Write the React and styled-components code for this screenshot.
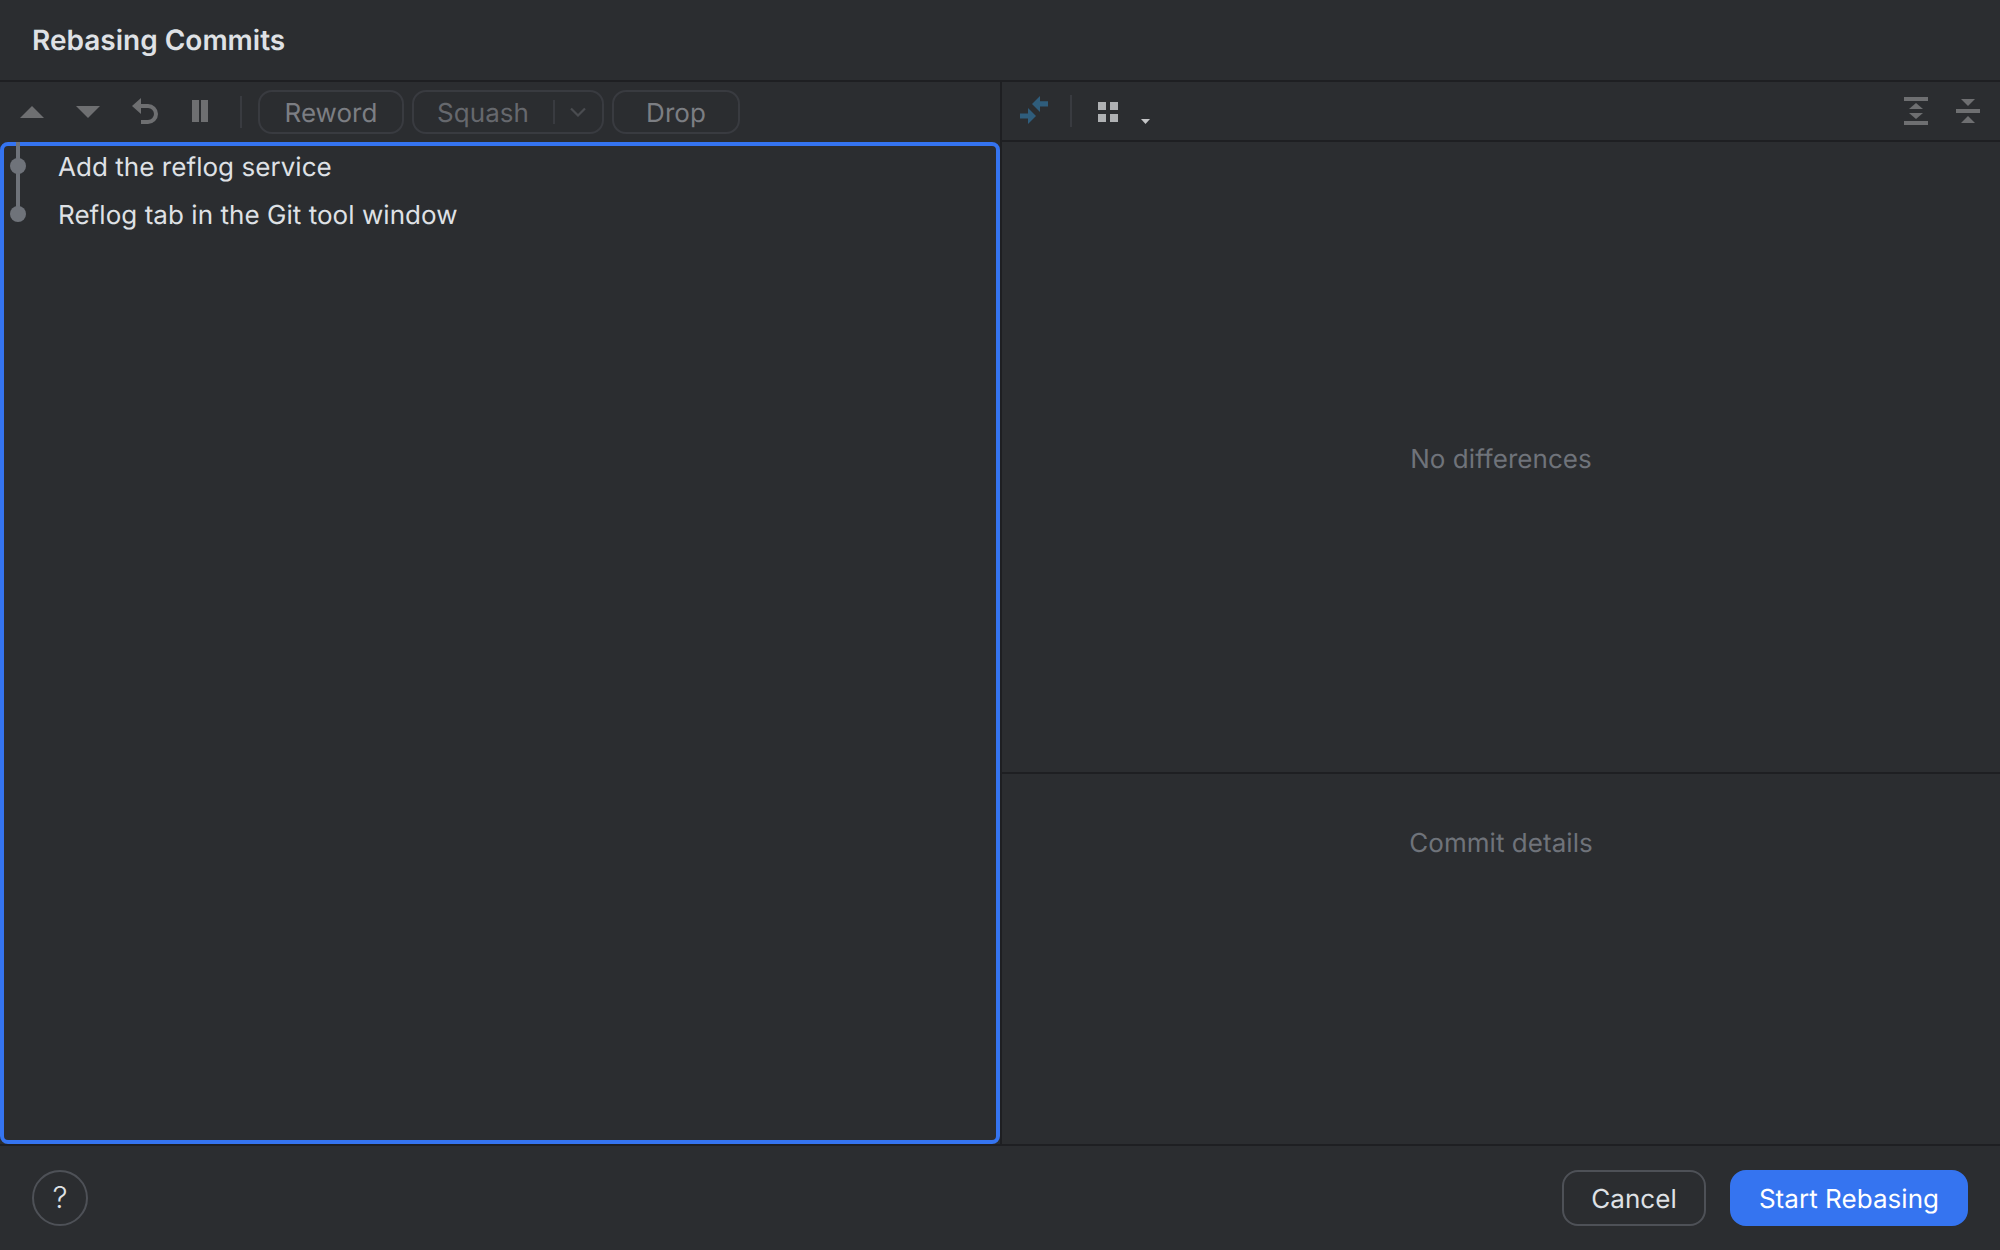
import React from 'react';
import styled, { createGlobalStyle } from 'styled-components';

const GlobalStyle = createGlobalStyle`
  html, body {
    margin: 0;
    padding: 0;
    background: #2b2d30;
  }
  * {
    box-sizing: border-box;
  }
`;

const Dialog = styled.div`
  display: flex;
  flex-direction: column;
  width: 2000px;
  height: 1250px;
  background: #2b2d30;
  color: #dfe1e5;
  font-family: Inter, "Liberation Sans", sans-serif;
  text-rendering: geometricPrecision;
  letter-spacing: 0.05px;
  overflow: hidden;
`;

const TitleBar = styled.div`
  display: flex;
  align-items: center;
  flex: 0 0 82px;
  padding: 0 32px;
  border-bottom: 2px solid #1e1f22;
  font-size: 28px;
  font-weight: 600;
  letter-spacing: 0;
`;

const Main = styled.div`
  display: flex;
  flex: 1;
  min-height: 0;
`;

const LeftPane = styled.div`
  display: flex;
  flex-direction: column;
  flex: 0 0 1000px;
`;

const RightPane = styled.div`
  display: flex;
  flex-direction: column;
  flex: 1;
  border-left: 2px solid #1e1f22;
`;

const Toolbar = styled.div`
  display: flex;
  align-items: center;
  flex: 0 0 60px;
  padding: 0 20px;
`;

const RightToolbar = styled(Toolbar)`
  padding: 0 20px 0 18px;
  border-bottom: 2px solid #1e1f22;
`;

const IconSlot = styled.div`
  display: flex;
  align-items: center;
  justify-content: center;
  flex: 0 0 auto;
  width: ${(p) => p.$w}px;
  margin: ${(p) => p.$mt || 0}px ${(p) => p.$mr || 0}px 0 ${(p) => p.$ml || 0}px;
`;

const Divider = styled.div`
  flex: 0 0 2px;
  height: 32px;
  background: #393b40;
  margin: 0 ${(p) => p.$right}px 0 ${(p) => p.$left}px;
`;

const PillButton = styled.div`
  display: flex;
  align-items: center;
  justify-content: center;
  width: ${(p) => p.$w}px;
  height: 44px;
  margin-right: 8px;
  padding-top: 2px;
  border: 2px solid #393b40;
  border-radius: 14px;
  color: ${(p) => (p.$dim ? '#66686d' : '#7c7e83')};
  font-size: 26px;
`;

const SplitPill = styled(PillButton)`
  justify-content: flex-start;
  padding-left: 23px;
`;

const SplitLine = styled.div`
  width: 2px;
  height: 24px;
  margin: -2px 0 0 24px;
  background: #393b40;
`;

const SplitArrow = styled.div`
  display: flex;
  margin: -2px 0 0 15px;
`;

const CommitList = styled.div`
  position: relative;
  flex: 1;
  border: 4px solid #3574f0;
  border-radius: 8px;
`;

const CommitRow = styled.div`
  display: flex;
  align-items: center;
  height: 48px;
  padding: 0 0 6px 54px;
  font-size: 26px;
`;

const Graph = styled.svg`
  position: absolute;
  left: 0;
  top: -4px;
`;

const Spacer = styled.div`
  flex: 1;
`;

const Placeholder = styled.div`
  display: flex;
  align-items: center;
  justify-content: center;
  flex: ${(p) => (p.$fixed ? '0 0 632px' : '1')};
  padding-top: ${(p) => p.$pt || 0}px;
  padding-bottom: ${(p) => p.$pb || 0}px;
  border-bottom: ${(p) => (p.$fixed ? '2px solid #1e1f22' : 'none')};
  color: #6f737a;
  font-size: 26px;
`;

const Footer = styled.div`
  display: flex;
  align-items: center;
  flex: 0 0 106px;
  padding: 0 32px;
  border-top: 2px solid #1e1f22;
`;

const HelpButton = styled.div`
  display: flex;
  align-items: center;
  justify-content: center;
  width: 56px;
  height: 56px;
  border: 2px solid #4e5157;
  border-radius: 50%;
  font-size: 30px;
  font-weight: 300;
`;

const DialogButton = styled.div`
  display: flex;
  align-items: center;
  justify-content: center;
  width: ${(p) => p.$w}px;
  height: 56px;
  margin-left: 24px;
  padding-top: 2px;
  border: 2px solid ${(p) => (p.$primary ? '#3574f0' : '#4e5157')};
  border-radius: 16px;
  background: ${(p) => (p.$primary ? '#3574f0' : 'transparent')};
  color: ${(p) => (p.$primary ? '#ffffff' : '#dfe1e5')};
  font-size: 26px;
`;

const grey = '#6e6f71';

const Triangle = ({ down }) => (
  <svg width="24" height="12" viewBox="0 0 24 12">
    <path d={down ? 'M0 0H24L12 12Z' : 'M12 0L24 12H0Z'} fill={grey} />
  </svg>
);

const UndoIcon = () => (
  <svg width="26" height="26" viewBox="0 0 26 26" fill="none">
    <path d="M9 0L0 8L9 16Z" fill={grey} />
    <path d="M8 8H16A8 8 0 0 1 16 24H9" stroke={grey} strokeWidth="4" />
  </svg>
);

const PauseIcon = () => (
  <svg width="16" height="22" viewBox="0 0 16 22">
    <rect x="0" y="0" width="7" height="22" fill={grey} />
    <rect x="9" y="0" width="7" height="22" fill={grey} />
  </svg>
);

const Chevron = () => (
  <svg width="16" height="10" viewBox="0 0 16 10" fill="none">
    <path d="M1 1.500L8 8.500L15 1.500" stroke="#4a4c50" strokeWidth="2.200" />
  </svg>
);

const SyncArrows = () => (
  <svg width="28" height="28" viewBox="0 0 28 28" fill="#2f5d7c">
    <path d="M12 8L20 0V5.300H28V10.600H20V16Z" />
    <path d="M16 20L8 12V17.500H0V22.500H8V28Z" />
  </svg>
);

const GridIcon = () => (
  <svg width="20" height="20" viewBox="0 0 20 20" fill="#afb1b3">
    <rect width="8" height="8" />
    <rect x="12" width="8" height="8" />
    <rect y="12" width="8" height="8" />
    <rect x="12" y="12" width="8" height="8" />
  </svg>
);

const SmallDrop = () => (
  <svg width="9" height="5" viewBox="0 0 9 5">
    <path d="M0 0H9L4.500 5Z" fill="#c4c5c7" />
  </svg>
);

const ExpandIcon = () => (
  <svg width="24" height="28" viewBox="0 0 24 28" fill={grey}>
    <rect width="24" height="4" />
    <rect y="24" width="24" height="4" />
    <path d="M12 6L19 12H5Z" />
    <path d="M5 16H19L12 22Z" />
  </svg>
);

const CollapseIcon = () => (
  <svg width="24" height="24" viewBox="0 0 24 24" fill={grey}>
    <path d="M5 0H19L12 7Z" />
    <rect y="10" width="24" height="4" />
    <path d="M12 17L19 24H5Z" />
  </svg>
);

const commits = ['Add the reflog service', 'Reflog tab in the Git tool window'];

const App = () => (
  <>
    <GlobalStyle />
    <Dialog>
      <TitleBar>Rebasing Commits</TitleBar>
      <Main>
        <LeftPane>
          <Toolbar>
            <IconSlot $w={24} $mr={32}><Triangle /></IconSlot>
            <IconSlot $w={24} $mr={32}><Triangle down /></IconSlot>
            <IconSlot $w={26} $mr={34} $mt={-2}><UndoIcon /></IconSlot>
            <IconSlot $w={16} $mt={-2}><PauseIcon /></IconSlot>
            <Divider $left={32} $right={16} />
            <PillButton $w={146}>Reword</PillButton>
            <SplitPill $w={192} $dim>
              Squash
              <SplitLine />
              <SplitArrow><Chevron /></SplitArrow>
            </SplitPill>
            <PillButton $w={128}>Drop</PillButton>
          </Toolbar>
          <CommitList>
            <Graph width="28" height="80" viewBox="0 0 28 80">
              <rect x="12" y="0" width="4" height="72" fill="#6f737a" />
              <circle cx="14" cy="24" r="8" fill="#6f737a" />
              <circle cx="14" cy="72" r="8" fill="#6f737a" />
            </Graph>
            {commits.map((c) => (
              <CommitRow key={c}>{c}</CommitRow>
            ))}
          </CommitList>
        </LeftPane>
        <RightPane>
          <RightToolbar>
            <IconSlot $w={28} $mt={-2}><SyncArrows /></IconSlot>
            <Divider $left={22} $right={26} />
            <IconSlot $w={20} $mt={2}><GridIcon /></IconSlot>
            <IconSlot $w={9} $ml={23} $mt={21}><SmallDrop /></IconSlot>
            <Spacer />
            <IconSlot $w={24} $mr={28}><ExpandIcon /></IconSlot>
            <IconSlot $w={24}><CollapseIcon /></IconSlot>
          </RightToolbar>
          <Placeholder $fixed $pt={4}>No differences</Placeholder>
          <Placeholder $pb={232}>Commit details</Placeholder>
        </RightPane>
      </Main>
      <Footer>
        <HelpButton>?</HelpButton>
        <Spacer />
        <DialogButton $w={144}>Cancel</DialogButton>
        <DialogButton $w={238} $primary>Start Rebasing</DialogButton>
      </Footer>
    </Dialog>
  </>
);

export default App;
